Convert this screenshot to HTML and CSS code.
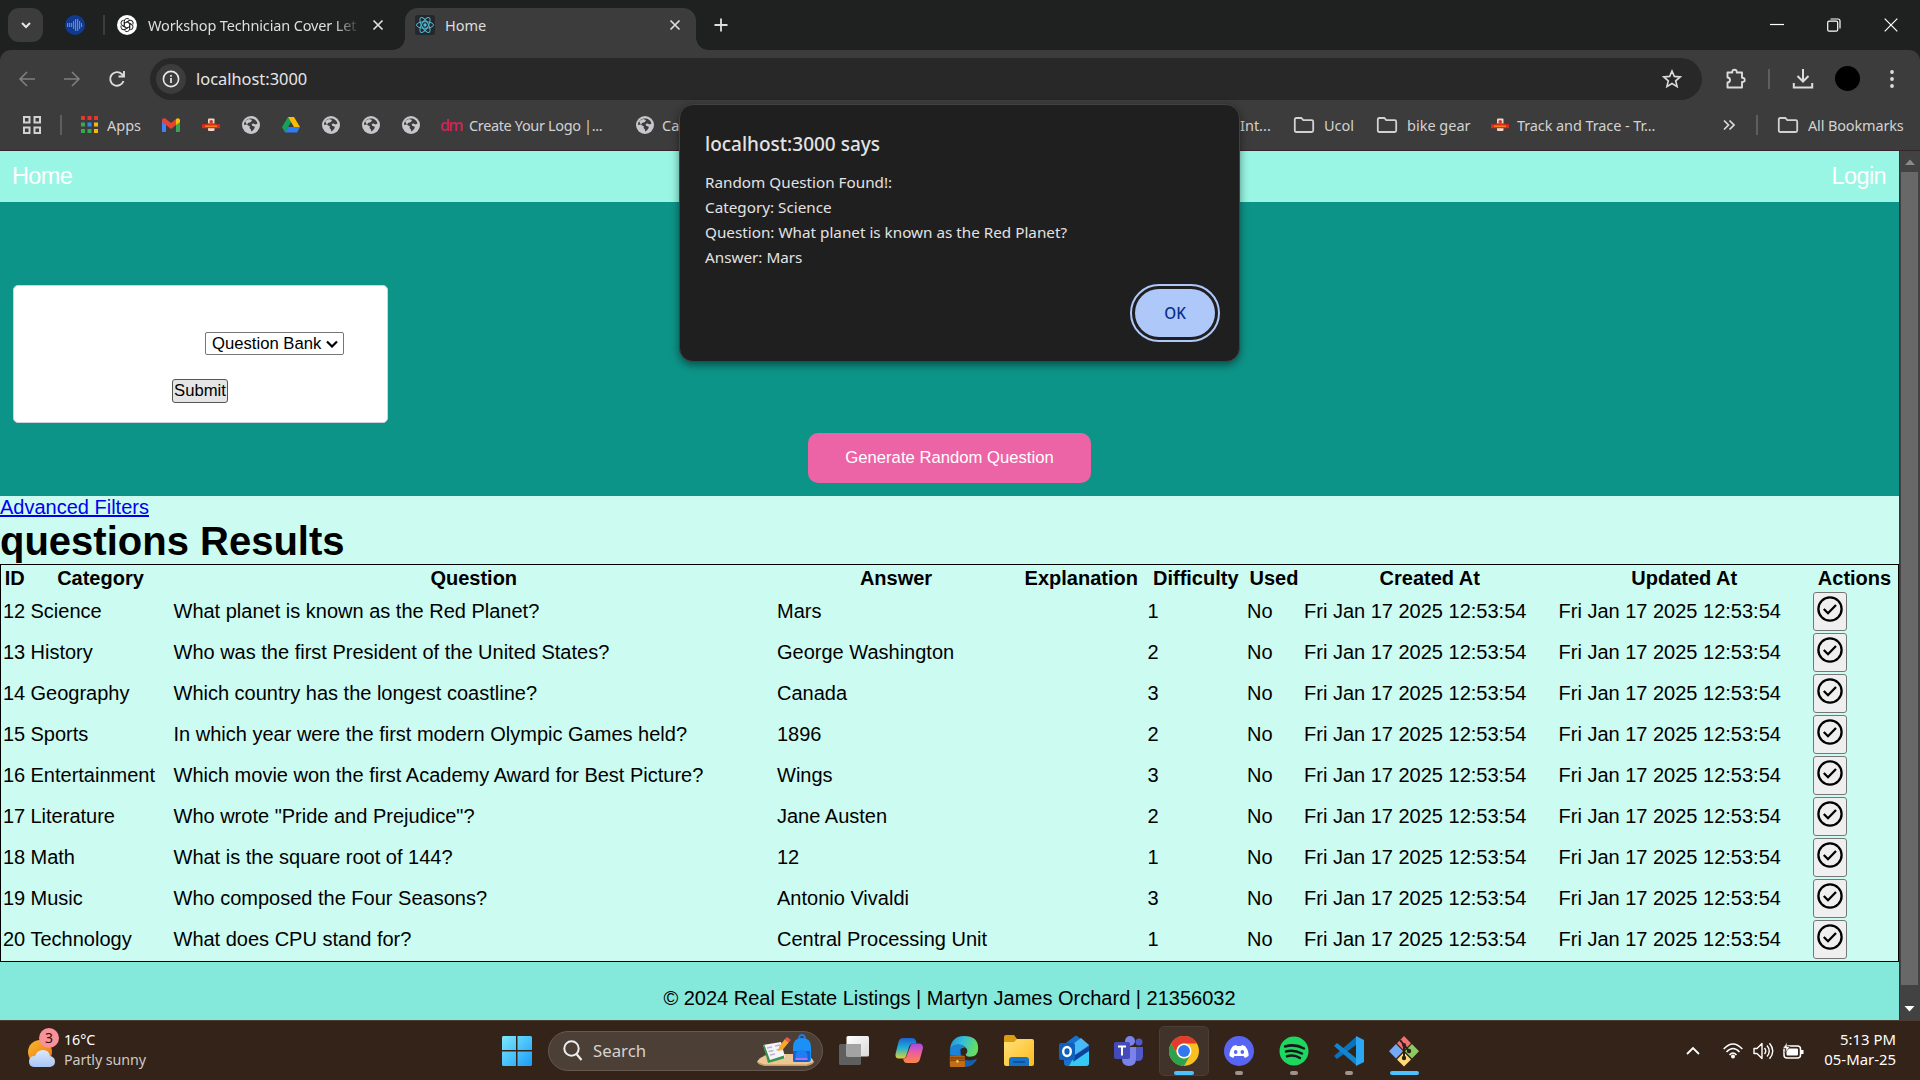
FILE: index.html
```html
<!DOCTYPE html>
<html lang="en">
<head>
<meta charset="utf-8">
<title>Home</title>
<link rel="stylesheet" href="styles.css">
</head>
<body>
<svg class="defs" width="0" height="0" aria-hidden="true">
  <defs>
    <symbol id="globe" viewBox="0 0 18 18"><circle cx="9" cy="9" r="9" fill="#c7c7cc"/><path d="M9 2.500c3 0 6 2 6.500 5l-2 1-2-1-2 .5 1 2 2 .5c1 1-1 4-3.500 5v-2l-1.500-1.500.5-1.500L4.500 8.500l-2.500.5C2 5 5 2.500 9 2.500z" fill="#3c3c3c"/><path d="M3 5l4-2 3 1-1 2-3 1-1 2z" fill="#c7c7cc"/></symbol>
    <symbol id="royal" viewBox="0 0 18 18"><rect x="6" y="2.500" width="6.500" height="12.500" rx="1" fill="#ecd9cd"/><circle cx="9.200" cy="5.800" r="1.800" fill="#c8391e"/><path d="M0 8.200h4l2-1h6.500l2 1H18v4H0z" fill="#e0281c"/><path d="M3 10.200h12" stroke="#f5971d" stroke-width="1.200"/></symbol>
    <symbol id="folder" viewBox="0 0 22 18"><path d="M1.800 14.500V3.500q0-1.500 1.500-1.500h5l2 2.200h8.400q1.500 0 1.500 1.500v8.800q0 1.500-1.500 1.500H3.300q-1.500 0-1.500-1.500z" fill="none" stroke="#d2d2d2" stroke-width="1.800"/></symbol>
    <symbol id="check" viewBox="0 0 28 28"><circle cx="14" cy="14" r="11.600" fill="none" stroke="#000" stroke-width="2.300"/><path d="M7.800 14l4.200 4.200 8-8.200" fill="none" stroke="#000" stroke-width="2.300"/></symbol>
    <symbol id="close" viewBox="0 0 12 12"><path d="M1.500 1.500l9 9M10.500 1.500l-9 9" stroke="#dedede" stroke-width="1.700"/></symbol>
    <linearGradient id="win" x1="0" y1="0" x2="1" y2="1"><stop offset="0" stop-color="#7ce8fb"/><stop offset="1" stop-color="#1a9dfa"/></linearGradient>
    <linearGradient id="sun" x1="0" y1="0" x2="1" y2="1"><stop offset="0" stop-color="#f8ba27"/><stop offset="1" stop-color="#ef6c1c"/></linearGradient>
    <linearGradient id="cloud" x1="0" y1="0" x2="0" y2="1"><stop offset="0" stop-color="#dbe9fc"/><stop offset="1" stop-color="#a7c5f4"/></linearGradient>
    <linearGradient id="cop1" x1="0" y1="0" x2="0" y2="1"><stop offset="0" stop-color="#1b62d8"/><stop offset=".5" stop-color="#22b3d1"/><stop offset="1" stop-color="#e8cf2d"/></linearGradient>
    <linearGradient id="cop2" x1="0" y1="0" x2="0" y2="1"><stop offset="0" stop-color="#a04be8"/><stop offset=".5" stop-color="#f0609b"/><stop offset="1" stop-color="#f9873f"/></linearGradient>
    <linearGradient id="edge" x1="0" y1="0" x2="1" y2=".3"><stop offset="0" stop-color="#1e8fdc"/><stop offset=".5" stop-color="#35c0d8"/><stop offset="1" stop-color="#64de62"/></linearGradient>
    <linearGradient id="fold" x1="0" y1="0" x2="1" y2="1"><stop offset="0" stop-color="#ffe178"/><stop offset="1" stop-color="#fdbb1d"/></linearGradient>
    <linearGradient id="white" x1="0" y1="0" x2="1" y2="1"><stop offset="0" stop-color="#fff"/><stop offset="1" stop-color="#d9d9d9"/></linearGradient>
  </defs>
</svg>

<header class="browser">
  <div class="tabstrip">
    <button class="tab-search"><svg width="12" height="9" viewBox="0 0 12 9"><path d="M2 2l4 4 4-4" fill="none" stroke="#e6e6e6" stroke-width="2"/></svg></button>
    <svg class="pinned" width="20" height="20" viewBox="0 0 20 20"><circle cx="10" cy="10" r="10" fill="#103a92"/><g stroke="#b9d0f5" stroke-width="1.200" stroke-dasharray="1.200 .8"><path d="M2 9h15M2 11h16M8 7h8M8 13h8M10 5h4M10 15h4"/></g></svg>
    <span class="strip-sep"></span>
    <div class="tab">
      <svg width="20" height="20" viewBox="0 0 20 20"><circle cx="10" cy="10" r="10" fill="#fff"/><g fill="none" stroke="#222" stroke-width="1"><g id="petal"><path d="M7.300 10V6.200a2.800 2.800 0 0 1 5.200-1.400M7.300 8.500l4.200-2.500"/></g><use href="#petal" transform="rotate(60 10 10)"/><use href="#petal" transform="rotate(120 10 10)"/><use href="#petal" transform="rotate(180 10 10)"/><use href="#petal" transform="rotate(240 10 10)"/><use href="#petal" transform="rotate(300 10 10)"/></g></svg>
      <span class="tab-title faded">Workshop Technician Cover Let</span>
      <svg width="12" height="12"><use href="#close"/></svg>
    </div>
    <div class="tab active">
      <svg width="20" height="20" viewBox="0 0 20 20"><rect width="20" height="20" rx="3" fill="#24272b"/><g fill="none" stroke="#4fb9d3" stroke-width="1"><ellipse cx="10" cy="10" rx="8.500" ry="3.300"/><ellipse cx="10" cy="10" rx="8.500" ry="3.300" transform="rotate(60 10 10)"/><ellipse cx="10" cy="10" rx="8.500" ry="3.300" transform="rotate(120 10 10)"/></g><circle cx="10" cy="10" r="1.700" fill="#4fb9d3"/></svg>
      <span class="tab-title">Home</span>
      <svg width="12" height="12"><use href="#close"/></svg>
    </div>
    <svg class="new-tab" width="14" height="14" viewBox="0 0 14 14"><path d="M7 .5v13M.5 7h13" stroke="#dedede" stroke-width="1.800"/></svg>
    <div class="window-controls">
      <svg width="14" height="14" viewBox="0 0 14 14"><path d="M0 6.500h14" stroke="#fff" stroke-width="1.200"/></svg>
      <svg width="14" height="14" viewBox="0 0 14 14"><g fill="none" stroke="#fff" stroke-width="1.200"><rect x=".7" y="3.200" width="10" height="10" rx="1.500"/><path d="M3.500 1h7.500q2 0 2 2v7.500"/></g></svg>
      <svg width="14" height="14" viewBox="0 0 14 14"><path d="M.7.700l12.600 12.600M13.300.700L.7 13.300" stroke="#fff" stroke-width="1.200"/></svg>
    </div>
  </div>
  <div class="toolbar">
    <svg class="nav-icon" width="18" height="18" viewBox="0 0 18 18"><path d="M17 9H2M9 2L2 9l7 7" fill="none" stroke="#7f7f7f" stroke-width="1.600"/></svg>
    <svg class="nav-icon" width="18" height="18" viewBox="0 0 18 18"><path d="M1 9h15M9 2l7 7-7 7" fill="none" stroke="#7f7f7f" stroke-width="1.600"/></svg>
    <svg class="nav-icon" width="18" height="18" viewBox="0 0 18 18"><path d="M15.500 11a6.800 6.800 0 1 1-1.600-6.800L16 6.300M16 1v5.500h-5.500" fill="none" stroke="#dcdcdc" stroke-width="1.900"/></svg>
    <div class="omnibox">
      <span class="site-info"><svg width="18" height="18" viewBox="0 0 18 18"><circle cx="9" cy="9" r="7.600" fill="none" stroke="#e8e8e8" stroke-width="1.600"/><path d="M9 8v5M9 5v1.700" stroke="#e8e8e8" stroke-width="1.700"/></svg></span>
      <span class="url">localhost:3000</span>
      <svg width="20" height="20" viewBox="0 0 20 20"><path d="M10 2l2.300 5.400 5.900.5-4.500 3.900 1.400 5.800L10 14.500l-5.100 3.100 1.400-5.800L1.800 7.900l5.900-.5z" fill="none" stroke="#dcdcdc" stroke-width="1.600"/></svg>
    </div>
    <svg class="ext" width="22" height="22" viewBox="0 0 22 22"><path d="M2.500 4.500h4.800q-.2-2.800 2.200-2.800t2.200 2.800H17v5.300q2.700-.2 2.700 2.100T17 14v5.500H2.500v-5q2.500-.2 2.500-2.500t-2.500-2.500z" fill="none" stroke="#dcdcdc" stroke-width="1.900" stroke-linejoin="round"/></svg>
    <span class="tool-sep"></span>
    <svg class="download" width="22" height="22" viewBox="0 0 22 22"><path d="M11 1v12M5.500 8l5.500 5.500L16.500 8M1.800 15v4.500h18.400V15" fill="none" stroke="#dcdcdc" stroke-width="2"/></svg>
    <span class="avatar"></span>
    <svg class="menu" width="6" height="20" viewBox="0 0 6 20"><g fill="#dcdcdc"><circle cx="3" cy="3" r="1.900"/><circle cx="3" cy="10" r="1.900"/><circle cx="3" cy="17" r="1.900"/></g></svg>
  </div>
  <div class="bookmarks">
    <svg class="b-grid" width="18" height="18" viewBox="0 0 18 18"><path d="M1 1h5.500v5.500H1zM11.500 1H17v5.500h-5.500zM1 11.500h5.500V17H1zM11.500 11.500H17V17h-5.500z" fill="none" stroke="#d2d2d2" stroke-width="2"/></svg>
    <span class="b-sep"></span>
    <svg class="b-apps" width="18" height="18" viewBox="0 0 18 18"><path d="M0 0h4v4H0zM6.500 0h4v4h-4zM13 0h4v4h-4z" fill="#e5372c"/><path d="M0 6.500h4v4H0zM0 13h4v4H0zM6.500 13h4v4h-4z" fill="#34a853"/><path d="M6.500 6.500h4v4h-4z" fill="#2b87f5"/><path d="M13 6.500h4v4h-4zM13 13h4v4h-4z" fill="#fbb50b"/></svg>
    <span class="b-text apps-text">Apps</span>
    <svg class="b-icon" width="18" height="14" viewBox="0 0 18 14"><path d="M0 2v11q0 1 1 1h3V5z" fill="#3f84f3"/><path d="M18 2v11q0 1-1 1h-3V5z" fill="#33a752"/><path d="M0 1.500Q2-.5 4 1l5 4 5-4v6l-5 4-5-4-4-3z" fill="#e94235"/><path d="M14 1q2-1.500 4 .5V4l-4 3z" fill="#fabb05"/></svg>
    <svg class="b-icon" width="18" height="18"><use href="#royal"/></svg>
    <svg class="b-icon" width="18" height="18"><use href="#globe"/></svg>
    <svg class="b-icon" width="18" height="16" viewBox="0 0 18 16"><path d="M6 0L0 10l3 5.500L9 5z" fill="#16a05c"/><path d="M6 0h6l6 10h-6z" fill="#fbbc05"/><path d="M6 10h12l-3 5.500H3z" fill="#2f7df0"/></svg>
    <svg class="b-icon" width="18" height="18"><use href="#globe"/></svg>
    <svg class="b-icon" width="18" height="18"><use href="#globe"/></svg>
    <svg class="b-icon" width="18" height="18"><use href="#globe"/></svg>
    <span class="dm">dm</span>
    <span class="b-text logo-text">Create Your Logo |...</span>
    <svg class="b-globe" width="18" height="18"><use href="#globe"/></svg>
    <span class="b-text cat-text">Cat</span>
    <span class="b-text int-text">Int...</span>
    <svg width="22" height="18"><use href="#folder"/></svg>
    <span class="b-text ucol-text">Ucol</span>
    <svg width="22" height="18"><use href="#folder"/></svg>
    <span class="b-text bike-text">bike gear</span>
    <svg class="b-royal" width="18" height="18"><use href="#royal"/></svg>
    <span class="b-text track-text">Track and Trace - Tr...</span>
    <svg class="b-more" width="12" height="12" viewBox="0 0 12 12"><path d="M1 1.500L5.500 6 1 10.500M6.500 1.500L11 6l-4.500 4.500" fill="none" stroke="#dcdcdc" stroke-width="1.700"/></svg>
    <span class="b-sep end"></span>
    <svg width="22" height="18"><use href="#folder"/></svg>
    <span class="b-text all-text">All Bookmarks</span>
  </div>
</header>

<div class="viewport">
  <main class="page">
    <nav class="navbar"><span>Home</span><span>Login</span></nav>
    <section class="hero">
      <form class="search-card">
        <div class="select">Question Bank<svg width="12" height="8" viewBox="0 0 12 8"><path d="M1 1.500l5 5 5-5" fill="none" stroke="#000" stroke-width="2.200"/></svg></div>
        <div class="submit">Submit</div>
      </form>
      <div class="generate">Generate Random Question</div>
    </section>
    <section class="results">
      <a class="filters" href="#">Advanced Filters</a>
      <h1>questions Results</h1>
      <table>
        <colgroup><col class="c-id"><col class="c-cat"><col class="c-q"><col class="c-a"><col class="c-ex"><col class="c-diff"><col class="c-used"><col class="c-cr"><col class="c-up"><col></colgroup>
        <thead><tr><th>ID</th><th>Category</th><th>Question</th><th>Answer</th><th>Explanation</th><th>Difficulty</th><th>Used</th><th>Created At</th><th>Updated At</th><th>Actions</th></tr></thead>
        <tbody>
          <tr><td>12</td><td>Science</td><td>What planet is known as the Red Planet?</td><td>Mars</td><td></td><td>1</td><td>No</td><td>Fri Jan 17 2025 12:53:54</td><td>Fri Jan 17 2025 12:53:54</td><td><span class="act"><svg width="28" height="28"><use href="#check"/></svg></span></td></tr>
          <tr><td>13</td><td>History</td><td>Who was the first President of the United States?</td><td>George Washington</td><td></td><td>2</td><td>No</td><td>Fri Jan 17 2025 12:53:54</td><td>Fri Jan 17 2025 12:53:54</td><td><span class="act"><svg width="28" height="28"><use href="#check"/></svg></span></td></tr>
          <tr><td>14</td><td>Geography</td><td>Which country has the longest coastline?</td><td>Canada</td><td></td><td>3</td><td>No</td><td>Fri Jan 17 2025 12:53:54</td><td>Fri Jan 17 2025 12:53:54</td><td><span class="act"><svg width="28" height="28"><use href="#check"/></svg></span></td></tr>
          <tr><td>15</td><td>Sports</td><td>In which year were the first modern Olympic Games held?</td><td>1896</td><td></td><td>2</td><td>No</td><td>Fri Jan 17 2025 12:53:54</td><td>Fri Jan 17 2025 12:53:54</td><td><span class="act"><svg width="28" height="28"><use href="#check"/></svg></span></td></tr>
          <tr><td>16</td><td>Entertainment</td><td>Which movie won the first Academy Award for Best Picture?</td><td>Wings</td><td></td><td>3</td><td>No</td><td>Fri Jan 17 2025 12:53:54</td><td>Fri Jan 17 2025 12:53:54</td><td><span class="act"><svg width="28" height="28"><use href="#check"/></svg></span></td></tr>
          <tr><td>17</td><td>Literature</td><td>Who wrote "Pride and Prejudice"?</td><td>Jane Austen</td><td></td><td>2</td><td>No</td><td>Fri Jan 17 2025 12:53:54</td><td>Fri Jan 17 2025 12:53:54</td><td><span class="act"><svg width="28" height="28"><use href="#check"/></svg></span></td></tr>
          <tr><td>18</td><td>Math</td><td>What is the square root of 144?</td><td>12</td><td></td><td>1</td><td>No</td><td>Fri Jan 17 2025 12:53:54</td><td>Fri Jan 17 2025 12:53:54</td><td><span class="act"><svg width="28" height="28"><use href="#check"/></svg></span></td></tr>
          <tr><td>19</td><td>Music</td><td>Who composed the Four Seasons?</td><td>Antonio Vivaldi</td><td></td><td>3</td><td>No</td><td>Fri Jan 17 2025 12:53:54</td><td>Fri Jan 17 2025 12:53:54</td><td><span class="act"><svg width="28" height="28"><use href="#check"/></svg></span></td></tr>
          <tr><td>20</td><td>Technology</td><td>What does CPU stand for?</td><td>Central Processing Unit</td><td></td><td>1</td><td>No</td><td>Fri Jan 17 2025 12:53:54</td><td>Fri Jan 17 2025 12:53:54</td><td><span class="act"><svg width="28" height="28"><use href="#check"/></svg></span></td></tr>
        </tbody>
      </table>
    </section>
    <footer>© 2024 Real Estate Listings | Martyn James Orchard | 21356032</footer>
  </main>
  <aside class="scrollbar">
    <svg width="20" height="20" viewBox="0 0 20 20"><path d="M5 14l5-5.500 5 5.500z" fill="#8a8a8a"/></svg>
    <div class="thumb"></div>
    <svg width="20" height="24" viewBox="0 0 20 24"><path d="M4.500 10h10l-5 5.500z" fill="#fff"/></svg>
  </aside>
</div>

<div class="dialog">
  <h2>localhost:3000 says</h2>
  <p>Random Question Found!:</p>
  <p>Category: Science</p>
  <p>Question: What planet is known as the Red Planet?</p>
  <p>Answer: Mars</p>
  <div class="ok">OK</div>
</div>

<div class="taskbar">
  <div class="weather">
    <svg width="32" height="46" viewBox="0 0 32 46"><circle cx="13" cy="24" r="12" fill="url(#sun)"/><path d="M8 39q-6 0-6-5.500t6-5.500q2-6 8-6t7 6q5 1 5 5.500T23 39z" fill="url(#cloud)"/><circle cx="22" cy="10" r="10" fill="#f99199"/><text x="22" y="15" text-anchor="middle" font-size="14" fill="#2a1010">3</text></svg>
    <div class="weather-text"><b>16°C</b><span>Partly sunny</span></div>
  </div>
  <svg class="start" width="30" height="30" viewBox="0 0 30 30"><path d="M1 0h13v14H0V1zM15.500 0H29l1 1v13H15.500zM0 15.500h14V30H1l-1-1zM15.500 15.500H30V29l-1 1H15.500z" fill="url(#win)"/></svg>
  <div class="search">
    <svg width="20" height="22" viewBox="0 0 20 22"><circle cx="8.500" cy="8.500" r="7.200" fill="none" stroke="#eee" stroke-width="2"/><path d="M13.500 14l5 6" stroke="#eee" stroke-width="2.200"/></svg>
    <span>Search</span>
    <svg width="58" height="34" viewBox="0 0 58 34"><path d="M0 28q3-6 14-8h30q10 1 13 8l-8 4H8z" fill="#ecc795"/><path d="M0 28l8 2.500h41l8-2.500q-2 4-10 4H10q-8 0-10-4z" fill="#c89a63"/><path d="M6 11l18-3 4 15-16 4z" fill="#f6f4fb"/><path d="M6 11l1.500 0L13 26l14-4.500v3L11 29z" fill="#38934f"/><path d="M10 14l5-1M11.500 17.500l5-1M13 21l5-1M18 12l5-1M19.500 16l4-1" stroke="#b6b2cf" stroke-width="1.300"/><path d="M21 17l1.500-5L28 5l4 3-6.500 8z" fill="#f7a92b"/><path d="M27.500 5.500L30 3l4 3-2.500 2.500z" fill="#e8584c"/><path d="M42 5q0-4 3-4t3 4" fill="none" stroke="#2678dc" stroke-width="2"/><path d="M36 28V13q0-9 9-9t9 9v13q0 2-3 2z" fill="#1b90f6"/><path d="M36 17h17v8q0 3-3 3H39q-3 0-3-3z" fill="#1460d5"/><path d="M38.500 21q1-5 6-5t6 5v4h-12z" fill="#1f7ff0"/><path d="M38.500 24h12v2h-12z" fill="#a875ee"/></svg>
  </div>
  <div class="apps">
    <div class="app"><svg width="30" height="34" viewBox="0 0 30 34"><rect x="0" y="10" width="22" height="21" rx="1.500" fill="#5f5f5f"/><rect x="7.500" y="2" width="22.500" height="20.500" rx="1.500" fill="url(#white)"/><path d="M7.500 10H22v12.500H7.500z" fill="#a3a3a3"/></svg></div>
    <div class="app"><svg width="30" height="34" viewBox="0 0 30 34"><path d="M9 4h9q3 0 4 3l.5 2.500H19q-3 0-4 3.500l-2.500 8q-1 3.500-4 3.500H5q-4 0-3.500-4.500L4.500 8Q5.500 4 9 4z" fill="url(#cop1)"/><path d="M22.500 9.500H25q4 0 4 4.500l-3 11q-1 4-5 4h-8q-3 0-3.500-3l-.5-1.500q3 0 4-3.500l3-8q1-3.500 3-3.500z" fill="url(#cop2)"/></svg></div>
    <div class="app"><svg width="32" height="36" viewBox="0 0 32 36"><path d="M1 20Q1 2 16 2q15 0 15 13 0 9-9 9-5 0-4-4 2-6-4-8-8-1-13 8z" fill="url(#edge)"/><path d="M1 20q0-9 9-9 6 0 6 4-5 2-2 9 5 7 16 2-4 9-13 9Q1 34 1 20z" fill="#1560ac"/><path d="M1 22q0-11 9-11 6 0 7 4l-5 1q-1 5 0 7z" fill="#1c84d6"/><circle cx="16" cy="18" r="3.500" fill="#342318"/><rect x="1" y="23" width="16" height="12" rx="1" fill="#c46c14"/><path d="M1 28h16" stroke="#7c3d0a"/><path d="M1 24h16v3H1z" fill="#8f4b0d"/><circle cx="9" cy="29" r="1.400" fill="#f8c939"/></svg></div>
    <div class="app"><svg width="30" height="32" viewBox="0 0 30 32"><path d="M0 2q0-2 2-2h8l3 4h12v6H0z" fill="#dc9c10"/><path d="M0 7h10l3-3h15q2 0 2 2v23q0 2-2 2H2q-2 0-2-2z" fill="url(#fold)"/><path d="M5 31v-6q0-3 3-3h14q3 0 3 3v6z" fill="#1572c8"/><path d="M9 27h12" stroke="#0b4c90" stroke-width="1.500"/></svg></div>
    <div class="app"><svg width="30" height="32" viewBox="0 0 30 32"><path d="M4 10L16 1q1-1 2 0l12 9v18q0 3-3 3H8q-3 0-3-3z" fill="#1572cf"/><path d="M10 12L22 3l8 7-14 10z" fill="#49b9f7"/><path d="M16 20l14-9v17q0 3-3 3H10z" fill="#35c9f5"/><path d="M16 20l14-9v5L14 27z" fill="#123f9c"/><rect x="0" y="8" width="16" height="17" rx="2" fill="#1061bd"/><ellipse cx="8" cy="16.500" rx="3.800" ry="4.500" fill="none" stroke="#fff" stroke-width="2.400"/></svg></div>
    <div class="app"><svg width="30" height="32" viewBox="0 0 30 32"><circle cx="16" cy="6" r="5" fill="#7b83eb"/><circle cx="25" cy="7" r="3.500" fill="#5059c9"/><path d="M20 12h9v9q0 5-5 5-4 0-4-4z" fill="#5059c9"/><path d="M9 12h13v12q0 7-7 7t-7-7z" fill="#7b83eb"/><rect y="7" width="16" height="17" rx="2" fill="#444bb8"/><path d="M4 11.500h8M8 11.500v9" stroke="#fff" stroke-width="2"/></svg></div>
    <div class="app current"><svg width="30" height="34" viewBox="0 0 48 48"><circle cx="24" cy="24" r="24" fill="#f9c01f"/><path d="M3.200 12A24 24 0 0 1 44.800 12H24a12 12 0 0 0-10.400 18z" fill="#e33b2e"/><path d="M3.200 12A24 24 0 0 0 24 48l10.400-18A12 12 0 0 1 13.600 30z" fill="#2da14d"/><circle cx="24" cy="24" r="12" fill="#fff"/><circle cx="24" cy="24" r="9.500" fill="#3177ed"/></svg><i class="mark wide"></i></div>
    <div class="app"><svg width="30" height="34" viewBox="0 0 30 34"><circle cx="15" cy="17" r="15" fill="#5865f2"/><path d="M9 12l3-1 1 1h4l1-1 3 1q4 5 3.500 10L21 24l-1.500-2h-9L9 24l-3.500-2Q5 17 9 12z" fill="#fff"/><ellipse cx="11.700" cy="18" rx="1.800" ry="2.100" fill="#5865f2"/><ellipse cx="18.300" cy="18" rx="1.800" ry="2.100" fill="#5865f2"/></svg><i class="mark"></i></div>
    <div class="app"><svg width="30" height="34" viewBox="0 0 30 34"><circle cx="15" cy="17" r="14.500" fill="#1ed760"/><path d="M6 12.500q10-3 19 2M7 17.500q8-2 16 2M8 22.300q7-2 13 1.700" fill="none" stroke="#181818" stroke-width="2.500" stroke-linecap="round"/></svg><i class="mark"></i></div>
    <div class="app"><svg width="30" height="34" viewBox="0 0 30 34"><path d="M22 11L3 25l-3-3L22 3z" fill="#0b73bd"/><path d="M0 12l3-3 19 15v7z" fill="#1285cf"/><path d="M22 2l8 4v22l-8 4z" fill="#2ba7f3"/></svg><i class="mark"></i></div>
    <div class="app"><svg width="30" height="34" viewBox="0 0 30 34"><g transform="translate(0 2) scale(1 .9)"><path d="M15 0l7 8-7 8-7-8z" fill="#f0716f"/><path d="M7 9l7 8-7 8-7-8z" fill="#73a9f5"/><path d="M23 9l7 8-7 8-7-8z" fill="#8acb62"/><path d="M15 18l7 8-7 8-7-8z" fill="#ffdb75"/></g><path d="M11 6l4 5v13M15 11l5 6" fill="none" stroke="#2c211a" stroke-width="2"/><circle cx="15" cy="11" r="2" fill="#2c211a"/><circle cx="20" cy="17" r="2.200" fill="#2c211a"/><circle cx="15" cy="24" r="2.200" fill="#2c211a"/></svg><i class="mark long"></i></div>
  </div>
  <div class="tray">
    <svg width="14" height="9" viewBox="0 0 14 9"><path d="M1 8l6-6 6 6" fill="none" stroke="#fff" stroke-width="1.800"/></svg>
    <svg class="wifi" width="20" height="16" viewBox="0 0 20 16"><g fill="none" stroke="#fff" stroke-width="1.500"><path d="M.7 6q9.300-10 18.600 0M3.500 9q6.500-7 13 0M6.500 12q3.500-4 7 0"/></g><circle cx="10" cy="13.500" r="2" fill="#fff"/></svg>
    <svg class="vol" width="21" height="18" viewBox="0 0 21 18"><path d="M1 6.500h3l5-5v15l-5-5H1z" fill="none" stroke="#fff" stroke-width="1.400" stroke-linejoin="round"/><path d="M11.500 6q2.500 3 0 6M14 3.500q4.500 5.500 0 11M16.500 1.200q6.500 7.800 0 15.600" fill="none" stroke="#fff" stroke-width="1.400"/></svg>
    <svg class="bat" width="21" height="18" viewBox="0 0 21 18"><rect x="1" y="4" width="16.500" height="12" rx="3" fill="none" stroke="#fff" stroke-width="1.500"/><rect x="3.500" y="6.500" width="11.500" height="7" rx="1" fill="#fff"/><path d="M18 8h2.500v4H18z" fill="#fff"/><path d="M4 0L0 6.500h3L2 11l5-6.500H4z" fill="#fff" stroke="#342318" stroke-width=".6"/></svg>
    <div class="clock"><span>5:13 PM</span><span>05-Mar-25</span></div>
  </div>
</div>
</body>
</html>
```
FILE: styles.css
```css
* { box-sizing: border-box; }
body { margin: 0; width: 1920px; height: 1080px; overflow: hidden; position: relative; font-family: "Liberation Sans", Arial, sans-serif; color: #000; background: #1f2120; }
svg { display: block; flex: none; }
.defs { position: absolute; }

.browser { height: 151px; font-family: "Noto Sans", sans-serif; font-size: 14.500px; color: #dedede; white-space: nowrap; }
.tabstrip { height: 50px; display: flex; align-items: center; background: #1f2120; padding: 8px 22px 0 8px; }
.tab-search { width: 35px; height: 34px; margin-top: -8px; border: 0; border-radius: 11px; background: #3c3c3c; padding: 0; display: flex; align-items: center; justify-content: center; }
.pinned { margin: -8px 0 0 22px; }
.strip-sep { width: 2px; height: 20px; margin: -8px 12px 0 18px; background: #3c3c3c; }
.tab { height: 42px; width: 288px; display: flex; align-items: center; gap: 11px; padding-bottom: 8px; }
.tab-title { flex: 1; overflow: hidden; }
.faded { flex: none; width: 212px; margin-right: 1px; letter-spacing: -.14px; -webkit-mask-image: linear-gradient(90deg, #000 88%, transparent); mask-image: linear-gradient(90deg, #000 88%, transparent); }
.tab.active { width: 291px; background: #3c3c3c; border-radius: 13px 13px 0 0; padding: 0 15px 8px 10px; gap: 10px; position: relative; }
.tab.active::before, .tab.active::after { content: ""; position: absolute; bottom: 0; width: 12px; height: 12px; }
.tab.active::before { left: -12px; background: radial-gradient(circle at 0 0, transparent 11.500px, #3c3c3c 12px); }
.tab.active::after { right: -12px; background: radial-gradient(circle at 100% 0, transparent 11.500px, #3c3c3c 12px); }
.new-tab { margin: -8px 0 0 18px; }
.window-controls { margin: -8px 0 0 auto; display: flex; gap: 43px; }

.toolbar { height: 50px; display: flex; align-items: center; background: #3c3c3c; padding: 7px 22px 0 18px; border-radius: 11px 11px 0 0; }
.nav-icon { margin: 0 27px 0 0; }
.omnibox { width: 1552px; height: 42px; margin-left: -3px; border-radius: 21px; background: #282828; display: flex; align-items: center; padding: 0 20px 0 6px; }
.site-info { width: 30px; height: 30px; border-radius: 50%; background: #3c3c3c; display: flex; align-items: center; justify-content: center; }
.url { flex: 1; margin-left: 10px; font-size: 16.400px; line-height: 22px; padding-top: 1px; color: #e6e6e6; }
.ext { margin-left: 23px; }
.tool-sep { width: 2px; height: 20px; margin: 0 22px 0 21px; background: #5e5e5e; }
.avatar { width: 25px; height: 25px; margin: 0 29px 0 21px; border-radius: 50%; background: #000; }

.bookmarks { height: 51px; display: flex; align-items: center; background: #3c3c3c; padding: 0 0 0 23px; border-bottom: 1px solid #35252c; color: #d2d2d2; }
.b-sep { width: 2px; height: 20px; margin: 0 19px; background: #5e5e5e; }
.b-apps { margin-right: 8px; }
.b-text { overflow: hidden; flex: none; }
.apps-text { width: 55px; }
.b-icon { margin-right: 22px; }
.dm { width: 29px; margin-left: -2px; font: 600 16px "Open Sans", sans-serif; letter-spacing: -1.800px; color: #cf2457; }
.logo-text { width: 167px; letter-spacing: -.36px; }
.b-globe { margin-right: 8px; }
.cat-text { width: 578px; }
.int-text { width: 53px; }
.ucol-text { width: 52px; margin-left: 9px; }
.bike-text { width: 84px; margin-left: 9px; }
.b-royal { margin-right: 8px; }
.track-text { width: 206px; letter-spacing: -.1px; }
.b-sep.end { margin: 0 19px 0 21px; }
.all-text { margin-left: 9px; letter-spacing: -.15px; }

.viewport { height: 869px; display: flex; }
.page { width: 1899px; display: flex; flex-direction: column; }
.navbar { height: 51px; padding: 0 13px 1px 12px; display: flex; align-items: center; justify-content: space-between; background: #99f6e4; color: #fff; font-size: 23.500px; letter-spacing: -.6px; }
.hero { height: 294px; background: #0d9488; padding: 83px 13px 0; display: flex; flex-direction: column; }
.search-card { width: 375px; height: 138px; border: 1px solid #d1d5db; border-radius: 5px; background: #fff; padding: 46px 0 0; display: flex; flex-direction: column; align-items: center; gap: 24px; font-size: 16.670px; }
.select { width: 139px; height: 23px; margin-left: 148px; border: 1px solid #767676; border-radius: 2px; display: flex; align-items: center; gap: 5px; padding-left: 6px; white-space: nowrap; }
.submit { width: 56px; height: 24px; margin-right: 1px; border: 1px solid #555; border-radius: 3px; background: #e5e5e5; line-height: 22px; text-align: center; }
.generate { width: 283px; height: 50px; margin-top: 10px; align-self: center; border-radius: 10px; background: #ed64a6; color: #fff; font-size: 16.670px; line-height: 50px; text-align: center; }
.results { height: 466px; background: #ccfbf1; font-size: 20px; }
.filters { display: block; line-height: 23px; color: #00e; }
h1 { margin: 0; font-size: 40px; line-height: 45px; }
table { width: 1899px; height: 398px; padding-bottom: 1px; table-layout: fixed; border: 1px solid #000; border-collapse: separate; border-spacing: 0; }
th, td { padding: 0 0 0 1px; white-space: nowrap; line-height: 24px; }
th { height: 26px; padding: 0 1px 0 0; }
td { height: 41px; text-align: left; padding-bottom: 2px; }
.c-id { width: 28.500px; } .c-cat { width: 143px; } .c-q { width: 603.500px; } .c-a { width: 241px; } .c-ex { width: 129.500px; } .c-diff { width: 99.500px; } .c-used { width: 57px; } .c-cr { width: 254.500px; } .c-up { width: 254.500px; }
td:first-child { padding-left: 2px; }
td:last-child { padding: 0; }
.act { display: block; width: 34px; height: 39px; margin-left: 1px; padding: 2px; border: 1px solid #767676; border-radius: 3px; background: #efefef; }
footer { height: 58px; background: #84e8da; display: flex; align-items: center; justify-content: center; padding-top: 14px; font-size: 20px; }
.scrollbar { width: 21px; background: #424242; border-left: 1px solid #353535; display: flex; flex-direction: column; }
.thumb { flex: 1; margin: 1px 2px 11px 1px; background: #686868; }

.dialog { position: absolute; left: 679px; top: 104px; width: 561px; height: 258px; padding: 25px 21px 20px 25px; border: 1px solid #414141; border-radius: 14px; background: #1f1f1f; box-shadow: 0 3px 8px rgba(0,0,0,.45); font: 15.250px/25px "Noto Sans", sans-serif; color: #e3e3e3; display: flex; flex-direction: column; }
.dialog h2 { margin: 0 0 12px; font-size: 19px; line-height: 28px; font-weight: 500; }
.dialog p { margin: 0; }
.ok { align-self: flex-end; width: 80px; height: 48px; margin: 19px 3px 0 0; border-radius: 24px; background: #aec9f9; color: #062e8f; font-weight: 500; line-height: 48px; text-align: center; outline: 2px solid #aec9f9; outline-offset: 3px; }

.taskbar { height: 60px; display: flex; align-items: center; background: #342318; border-top: 1px solid #4c3d33; font-family: "Noto Sans", sans-serif; font-size: 14.300px; color: #fff; }
.weather { width: 502px; display: flex; gap: 5px; padding-left: 27px; align-items: center; }
.weather-text { margin-top: -2px; letter-spacing: -.1px; }
.weather b, .weather span { display: block; font-weight: 400; line-height: 20px; }
.weather span { color: #cfc9c5; }
.search { width: 275px; height: 40px; margin-left: 16px; border: 1px solid #66584f; border-radius: 20px; background: #4c3f36; display: flex; align-items: center; padding: 0 7px 0 14px; font-size: 16.800px; color: #d6d1cd; }
.search span { flex: 1; margin-left: 10px; }
.apps { display: flex; gap: 5px; margin-left: 6px; }
.app { width: 50px; height: 50px; display: flex; align-items: center; justify-content: center; position: relative; border: 1px solid transparent; border-radius: 5px; }
.app svg { max-height: 34px; }
.current svg { height: 30px; }
.current { background: #41332a; border-color: #4c3e35; }
.mark { position: absolute; bottom: 0; width: 8px; height: 4px; border-radius: 2px; background: #9d948e; }
.mark.wide { width: 20px; background: #4cc2ff; }
.mark.long { width: 29px; background: #4cc2ff; }
.tray { margin-left: auto; display: flex; align-items: center; padding-right: 24px; }
.wifi { margin-left: 23px; }
.vol { margin-left: 10px; }
.bat { margin-left: 9px; }
.clock { margin: -3px 0 0 20px; text-align: right; font-size: 14.900px; }
.clock span { display: block; line-height: 20px; }
```
